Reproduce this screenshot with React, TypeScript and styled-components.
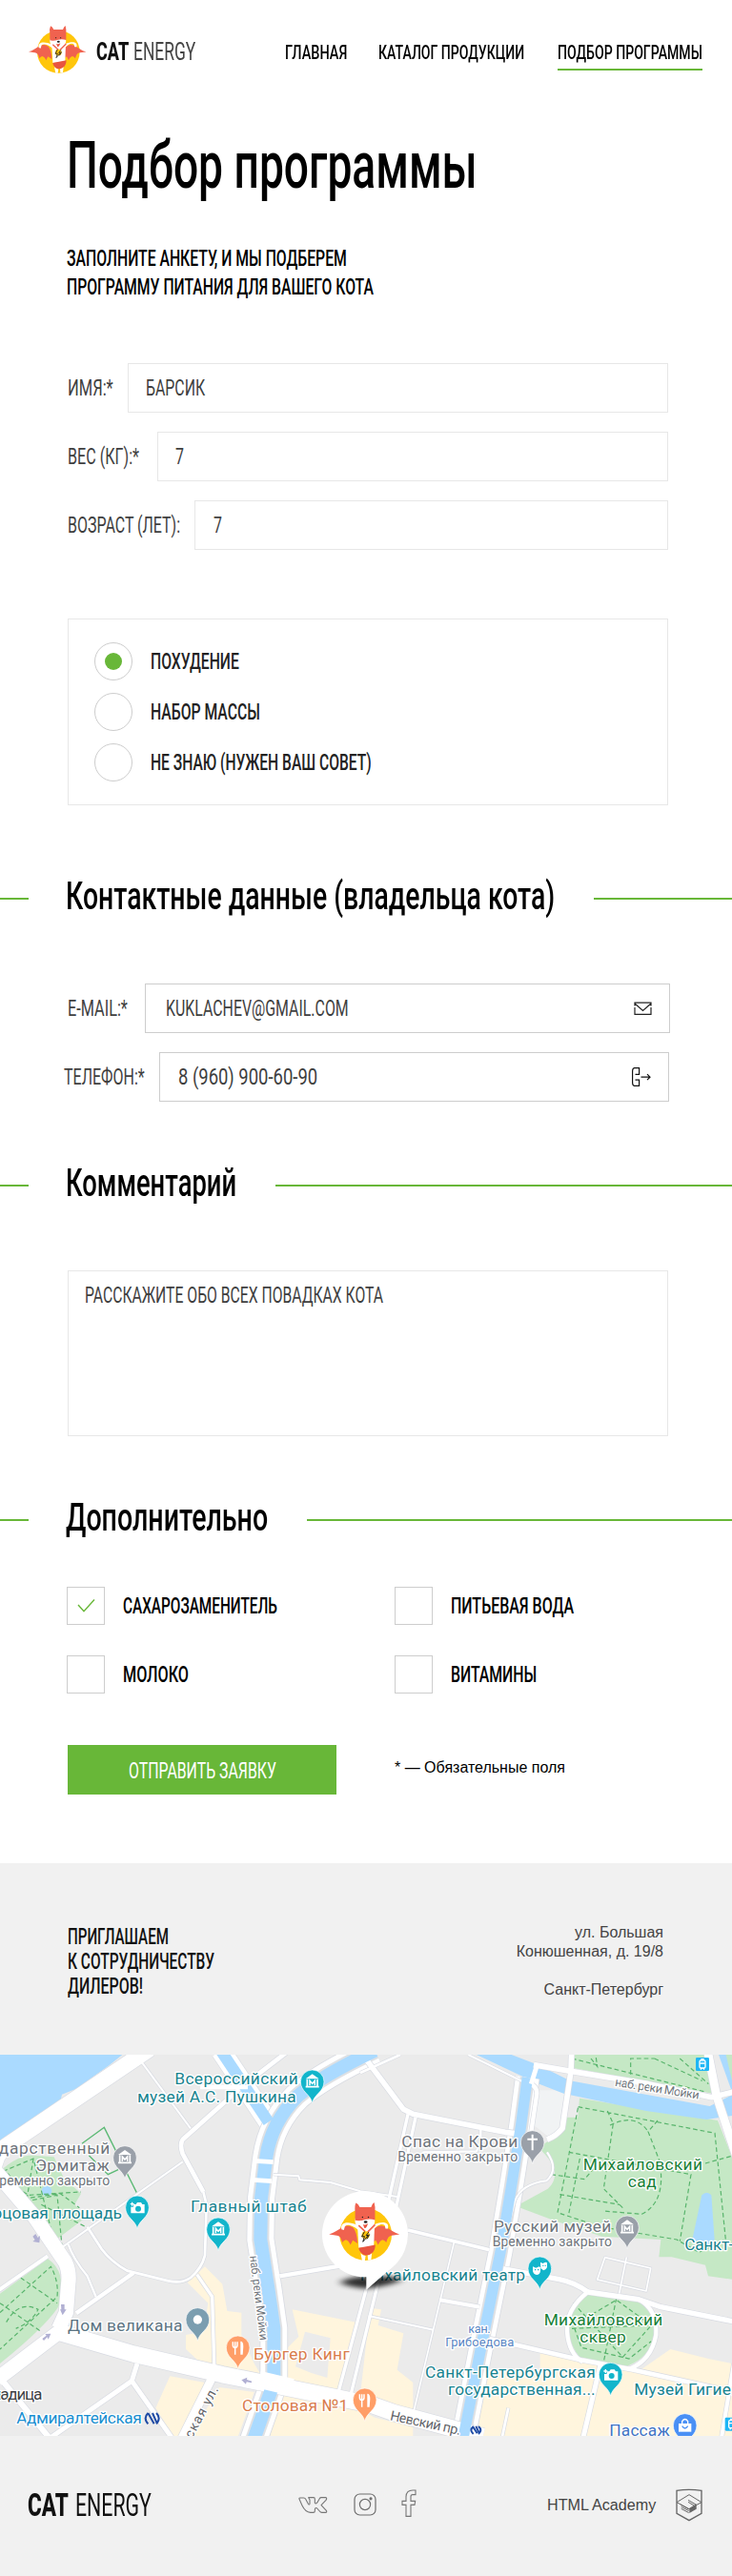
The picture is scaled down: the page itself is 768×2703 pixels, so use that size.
import React, { useLayoutEffect, useRef, useState } from 'react';
import styled, { createGlobalStyle, css } from 'styled-components';

const GREEN = '#68b738';

const GlobalStyle = createGlobalStyle`
  *, *::before, *::after { box-sizing: border-box; }
  body { margin: 0; background: #fff; color: #000; font-family: Roboto, sans-serif; }
  h1, h2, p { margin: 0; font-weight: inherit; }
  button { font: inherit; }
  a { color: inherit; text-decoration: none; }
`;

/* ---------- condensed type ---------- */

const NarrowBox = styled.span<{ $w: number }>`
  display: block;
  flex: none;
  width: ${(p) => p.$w}px;
  white-space: nowrap;
`;

const NarrowInk = styled.span<{ $size: number; $weight: number; $color?: string }>`
  display: inline-block;
  vertical-align: top;
  transform-origin: 0 50%;
  font-family: Roboto, sans-serif;
  font-size: ${(p) => p.$size}px;
  font-weight: ${(p) => p.$weight};
  ${(p) => p.$color && css`color: ${p.$color};`}
`;

type NarrowProps = { w: number; size?: number; weight?: number; color?: string; children: string };

/** Squeezes a line of text horizontally so that it fills exactly `w` pixels. */
function Narrow({ w, size = 23, weight = 420, color, children }: NarrowProps) {
  const ref = useRef<HTMLSpanElement>(null);
  const [scale, setScale] = useState(1);
  useLayoutEffect(() => {
    if (ref.current) setScale(w / ref.current.offsetWidth);
  }, [w, size, weight, children]);
  const drop = size === 23 ? 1 : 0;
  return (
    <NarrowBox $w={w}>
      <NarrowInk
        ref={ref}
        $size={size}
        $weight={weight}
        $color={color}
        style={{ transform: `translateY(${drop}px) scaleX(${scale})` }}
      >
        {children}
      </NarrowInk>
    </NarrowBox>
  );
}

/* ---------- header ---------- */

const Page = styled.div`
  width: 768px;
  overflow: hidden;
`;

const Header = styled.header`
  display: flex;
  justify-content: space-between;
  align-items: flex-start;
  height: 108px;
  padding: 27px 31px 0 30px;
`;

const Brand = styled.a`
  display: flex;
  align-items: center;
  height: 54px;
  line-height: 30px;
`;

const BrandLogo = styled.span`
  display: flex;
  align-self: flex-start;
  margin-right: 11px;
`;

const BrandName = styled.span<{ $gap: number }>`
  display: flex;
  gap: ${(p) => p.$gap}px;
`;

const Nav = styled.nav`
  display: flex;
  gap: 35px;
  padding-top: 16px;
`;

const NavLink = styled.a<{ $active?: boolean }>`
  line-height: 24px;
  padding-bottom: 5px;
  border-bottom: 2px solid ${(p) => (p.$active ? GREEN : 'transparent')};
  &:first-child { margin-right: -2px; }
`;

function CatLogo({ width, height }: { width: number; height: number }) {
  const wing = 'M90 163 C104 159 112 152 122 146 Q138 136 152 146 Q162 158 163 186 L151 178 L145 190 Q140 178 133 177 Q128 178 124 184 Q120 166 110 166Z';
  return (
    <svg width={width} height={height} viewBox="90 81 180 150">
      <circle cx="184" cy="163" r="67" fill="#ffc60b" />
      <path d={wing} fill="#f0624f" />
      <path d={wing} fill="#f0624f" transform="translate(361 0) scale(-1 1)" />
      <path d="M122 150 C118 132 138 128 164 140 L170 156 C152 140 138 136 131 142 L128 152Z" fill="#fff" />
      <path d="M241 148 C246 132 228 128 206 138 L199 156 C214 138 226 134 233 140 L235 148Z" fill="#fff" />
      <path d="M163 138H207L205 194L166 198Z" fill="#fff" />
      <path d="M157 122H207Q210 136 200 145Q182 158 165 146Q155 138 157 122Z" fill="#fff" />
      <path d="M157 105Q155 90 159 82Q165 84 169 93H198Q201 84 206 81Q209 92 208 105V126Q196 122 183 125Q168 130 157 127Z" fill="#f0624f" />
      <circle cx="176" cy="119" r="1.7" fill="#222" />
      <circle cx="191" cy="119" r="1.7" fill="#222" />
      <ellipse cx="184" cy="131" rx="4.5" ry="3" fill="#222" />
      <path d="M177 137Q184 141 190 135Q186 149 181 147Z" fill="#e8543f" />
      <path d="M166 140L183 156M208 138L189 157" stroke="#f0624f" strokeWidth="4" fill="none" />
      <circle cx="184" cy="165" r="10" fill="#ffc60b" />
      <path d="M181 156L174 169L181 168L177 182L191 165L185 166L192 157M187 175L194 163" stroke="#222" strokeWidth="2.4" fill="none" />
      <path d="M166 198L209 190Q208 207 198 213Q190 219 180 216Q168 210 166 198Z" fill="#e8543f" />
      <path d="M171 211Q176 217 184 218L182 230H175Z" fill="#fff" />
      <path d="M189 217Q196 215 200 211L198 229H190Z" fill="#fff" />
    </svg>
  );
}

/* ---------- form ---------- */

const Intro = styled.div`
  padding: 0 67px 0 70px;
  h1 { margin-top: 31px; line-height: 70px; }
  p { margin-top: 47px; line-height: 30px; }
`;

const Rows = styled.div<{ $top: number; $left?: number; $right?: number }>`
  display: flex;
  flex-direction: column;
  gap: 20px;
  padding: 0 ${(p) => p.$right ?? 67}px 0 ${(p) => p.$left ?? 71}px;
  margin-top: ${(p) => p.$top}px;
`;

const Field = styled.label<{ $gap: number; $shift?: number; $trim?: number }>`
  display: flex;
  align-items: center;
  gap: ${(p) => p.$gap}px;
  margin-left: ${(p) => p.$shift ?? 0}px;
  margin-right: ${(p) => p.$trim ?? 0}px;
  color: #3f3f3f;
  line-height: 30px;
`;

const FieldBox = styled.span<{ $pad: number; $strong?: boolean }>`
  display: flex;
  align-items: center;
  justify-content: space-between;
  flex: 1;
  height: 52px;
  padding: 0 18px 0 ${(p) => p.$pad}px;
  border: 1px solid ${(p) => (p.$strong ? '#cdcdcd' : '#e7e7e7')};
  svg { flex: none; }
`;

const GoalSet = styled.div`
  display: flex;
  flex-direction: column;
  gap: 13px;
  height: 196px;
  margin: 72px 67px 0 71px;
  padding: 24px 27px;
  border: 1px solid #e7e7e7;
`;

const Option = styled.label<{ $color?: string }>`
  display: flex;
  align-items: center;
  gap: 19px;
  height: 40px;
  line-height: 30px;
  color: ${(p) => p.$color ?? '#000'};
`;

const Mark = styled.span<{ $round?: boolean }>`
  display: flex;
  align-items: center;
  justify-content: center;
  flex: none;
  width: 40px;
  height: 40px;
  border: 1px solid #cdcdcd;
  border-radius: ${(p) => (p.$round ? '50%' : '0')};
`;

const Dot = styled.span`
  width: 18px;
  height: 18px;
  border-radius: 50%;
  background: ${GREEN};
`;

const SectionTitle = styled.h2<{ $top: number }>`
  display: flex;
  align-items: center;
  height: 42px;
  margin-top: ${(p) => p.$top}px;
  line-height: 42px;
  &::before { content: ''; width: 30px; height: 2px; margin-right: 39px; background: ${GREEN}; }
  &::after { content: ''; flex: 1; height: 2px; margin-left: 41px; background: ${GREEN}; }
  > span { padding-bottom: 6px; }
`;

const Comment = styled.div`
  height: 174px;
  margin: 68px 67px 0 71px;
  padding: 10px 17px;
  border: 1px solid #e7e7e7;
  line-height: 30px;
  color: #3f3f3f;
`;

const Extras = styled.div`
  display: grid;
  grid-template-columns: 344px 1fr;
  row-gap: 32px;
  margin: 49px 67px 0 70px;
`;

const SubmitRow = styled.div`
  display: flex;
  align-items: center;
  gap: 61px;
  margin: 54px 0 72px 71px;
`;

const Submit = styled.button`
  display: flex;
  align-items: center;
  justify-content: center;
  width: 282px;
  height: 52px;
  padding: 2px 0 0;
  border: 0;
  background: ${GREEN};
  color: #fff;
  line-height: 30px;
`;

const Note = styled.span`
  font: 16px/20px 'Liberation Sans', Arial, sans-serif;
  padding-bottom: 4px;
`;

/* ---------- dealers, map, footer ---------- */

const Dealers = styled.section`
  display: flex;
  justify-content: space-between;
  height: 201px;
  padding: 64px 72px 0 71px;
  background: #f1f1f1;
  color: #111;
  line-height: 26px;
`;

const Address = styled.address`
  font: normal 16px/20px 'Liberation Sans', Arial, sans-serif;
  color: #444;
  text-align: right;
  margin-top: -1px;
  p + p { margin-top: 20px; }
`;

const MapFrame = styled.div`
  height: 400px;
  svg { display: block; }
`;

const Footer = styled.footer`
  display: grid;
  grid-template-columns: 284px 290px 1fr;
  height: 147px;
  padding: 54px 31px 0 29px;
  background: #f1f1f1;
  color: #111;
`;

const FooterBrand = styled.div`
  display: flex;
  gap: 7px;
  height: 38px;
  line-height: 38px;
`;

const Social = styled.div`
  display: flex;
  align-items: center;
  height: 36px;
  svg:nth-child(2) { margin-left: 27px; }
  svg:nth-child(3) { margin: -4px 0 0 26px; }
`;

const Academy = styled.a`
  display: flex;
  align-items: center;
  justify-content: space-between;
  height: 36px;
  font: 16.15px/20px 'Liberation Sans', Arial, sans-serif;
  color: #444;
  margin-left: -29px;
`;

/* ---------- map ---------- */

type PinKind = 'museum' | 'camera' | 'dot' | 'food' | 'cross' | 'theatre' | 'bag';

function Pin({ x, y, color, kind }: { x: number; y: number; color: string; kind: PinKind }) {
  return (
    <g transform={`translate(${x} ${y})`}>
      <path d="M0 67C-5 40 -37 32 -37 0A37 37 0 0 1 37 0C37 32 5 40 0 67Z" fill={color} stroke="#fff" strokeWidth="2" />
      {kind === 'museum' && (
        <>
          <path d="M-21 -9L0 -24L21 -9Z" fill="#fff" />
          <path d="M-16 -8V14M16 -8V14M-21 16H21" stroke="#fff" strokeWidth="5" />
          <path d="M-8 12V-3L0 6L8 -3V12" stroke="#fff" strokeWidth="4.5" fill="none" />
        </>
      )}
      {kind === 'camera' && (
        <>
          <path d="M-12 -10H-4L0 -16H12L16 -10H23V18H-20V-2H-12Z" fill="#fff" />
          <circle cx="3" cy="4" r="9" fill={color} />
          <path d="M-22 -11H-10M-16 -17V-5" stroke="#fff" strokeWidth="4" />
        </>
      )}
      {kind === 'dot' && <circle r="14" fill="#fff" />}
      {kind === 'food' && (
        <>
          <path d="M-16 -18V-8Q-16 0 -9 0Q-2 0 -2 -8V-18M-9 -18V22" stroke="#fff" strokeWidth="4.5" fill="none" />
          <path d="M8 -20Q17 -20 17 -4L15 22H8Z" fill="#fff" />
        </>
      )}
      {kind === 'cross' && <path d="M0 -25V25M-16 -10H16" stroke="#fff" strokeWidth="6" />}
      {kind === 'theatre' && (
        <>
          <path d="M2 -20L9 -16L18 -20L23 -18V-4Q20 5 12 6L3 0Z" fill="#fff" />
          <path d="M-22 -6L-12 -2L-2 -6L2 -3V8Q0 20 -10 20Q-20 18 -22 8Z" fill="#fff" />
          <path d="M-16 4H-12M-7 4H-3M9 -9H12M16 -9H19" stroke={color} strokeWidth="4" />
        </>
      )}
      {kind === 'bag' && (
        <>
          <path d="M-20 -6H20V20H-20Z" fill="#fff" />
          <path d="M-9 -6V-13Q0 -26 9 -13V-6" stroke="#fff" strokeWidth="4" fill="none" />
          <path d="M-9 2Q0 16 9 2" stroke={color} strokeWidth="4" fill="none" />
        </>
      )}
    </g>
  );
}

const MapText = styled.text<{ $size?: number; $weight?: number }>`
  font-family: Roboto, sans-serif;
  font-size: ${(p) => p.$size ?? 52}px;
  font-weight: ${(p) => p.$weight ?? 400};
  paint-order: stroke;
  stroke: #fff;
  stroke-width: 8px;
  stroke-linejoin: round;
`;

type LabelProps = { x: number; y: number; w: number; color: string; size?: number; weight?: number; rotate?: number; children: string };

function Label({ x, y, w, color, size, weight, rotate, children }: LabelProps) {
  return (
    <MapText
      x={x}
      y={y}
      textLength={w}
      fill={color}
      $size={size}
      $weight={weight}
      transform={rotate ? `rotate(${rotate} ${x} ${y})` : undefined}
    >
      {children}
    </MapText>
  );
}

const TEAL = '#18838f';
const CYAN_PIN = '#12b5cb';
const GREY = '#6e747b';
const GREY_PIN = '#9aa0a9';

/* [path, width] pairs, in map units (three to the pixel) */
const ROADS: [string, number][] = [
  ['M470 0L20 305Q-20 335 -20 390', 50],
  ['M-10 390L110 530L205 670Q220 700 215 740L208 830L185 880', 46],
  ['M180 890L420 960L700 1025L1170 1120L1240 1145L1520 1220', 52],
  ['M200 880L-10 1040', 46],
  ['M0 1035L160 1230', 18],
  ['M-5 760L150 652', 12],
  ['M432 990L415 1045L150 1230', 15],
  ['M415 1045L545 1230', 15],
  ['M665 1040L570 1230', 26],
  ['M900 12L760 120L575 285Q565 300 575 330L640 450', 14],
  ['M640 450L650 490L645 650Q635 690 600 720Q570 740 530 730L400 698Q350 670 320 630L275 560', 8],
  ['M445 40L600 250', 6],
  ['M575 355L185 632', 6],
  ['M215 615Q230 660 275 715L302 780', 7],
  ['M240 832L420 705', 13],
  ['M620 710L668 780L675 1020', 10],
  ['M880 715L1070 683', 13],
  ['M860 395L940 400L943 412L1040 420L1134 448L1250 465', 6],
  ['M1134 8L1270 190L1300 205L1590 262L1640 268', 17],
  ['M1134 75L1260 18', 8],
  ['M1284 205L1200 580L1060 1100', 10],
  ['M1308 215L1240 530L1100 1105', 10],
  ['M1513 245V290L1500 322L1330 325', 7],
  ['M1284 570L1540 632', 11],
  ['M1430 605L1300 1150', 5],
  ['M1384 790L1510 812', 12],
  ['M1160 840L1364 884', 6],
  ['M1584 692L1760 725Q1810 735 1850 765', 16],
  ['M1850 765L2010 788L2080 812L2310 858', 16],
  ['M1850 765Q1780 820 1785 890Q1790 960 1834 985', 13],
  ['M2010 788Q2070 820 2065 900Q2050 980 1980 1008', 13],
  ['M1540 912L1834 980L1994 1010L2310 1080', 14],
  ['M1892 985L1834 1230', 15],
  ['M2310 990L2270 1230', 12],
  ['M1904 656L2048 690L2034 762L1880 726Z', 5],
  ['M1972 655L1949 770', 5],
  ['M1799 10L1797 70L1770 250Q1750 275 1722 285', 17],
  ['M1680 50L1797 70L2040 110L2240 152L2310 135', 17],
  ['M2226 0L2256 150L2320 345', 26],
  ['M1474 18L1650 105', 6],
  ['M1650 105Q1690 110 1690 140L1672 260', 13],
  ['M1722 325Q1760 380 1720 415Q1640 425 1620 480L1600 560', 6],
  ['M1580 1225L1600 1130', 8],
];

const CANALS = [
  { d: 'M1180 5Q1010 85 935 150Q855 230 838 340L822 470L820 600L845 760L862 880V1050L795 1240', total: 84, water: 42 },
  { d: 'M1660 90L1640 240L1610 430L1575 640L1510 960L1455 1240', total: 74, water: 34 },
];

const TREES = [
  'M10 385L105 345L165 585L20 385M-5 400L90 460L255 450M105 345L85 470L190 455L250 500M130 490L270 560M80 480L180 460L195 620',
  'M0 830L160 685Q185 730 180 780L0 945M65 720L180 800M0 800L130 890M20 860Q60 790 120 820Q100 860 50 880',
  'M1820 182L2250 265L2284 600L2200 640L2130 600L1890 560L1755 515L1820 182M1790 325L2175 395L2140 605M1762 458L1950 490M1912 195L1930 235L1900 440L1960 500M2070 225L2040 260L2075 350Q2100 480 2020 520L1900 510M1920 240Q2000 200 2040 260M1735 395L1840 410L1870 375M1825 345L1790 520M2220 360L2310 335',
  'M1800 30L2220 135M1985 80V30H2060M2060 30L2210 100M2140 30L2230 110M1860 30L1880 55L1875 20',
  'M1805 800L1960 970L2050 870L1940 790L1805 870L1830 940L1980 975L2050 920M1940 785L1900 985M1800 880L2040 870',
];

function CityMap() {
  return (
    <svg width="768" height="400" viewBox="0 18 2304 1200">
      <defs>
        <filter id="shade" x="-30%" y="-80%" width="160%" height="260%">
          <feGaussianBlur stdDeviation="12 8" />
        </filter>
      </defs>
      <rect y="18" width="2304" height="1200" fill="#ebebeb" />
      <path d="M0 18H385L345 50L240 125L195 143L190 165L0 295Z" fill="#aadaff" />
      <path d="M0 385Q60 330 110 335L170 340L200 405L255 455L235 490L270 530L170 605L120 560Z" fill="#c5e8c5" />
      <path d="M150 660Q210 700 190 800Q160 860 0 990V770Z" fill="#c5e8c5" />
      <circle cx="147" cy="447" r="16" fill="#aadaff" />
      <path d="M258 298L328 247L430 452M280 335L340 395L372 380" stroke="#5bb974" strokeWidth="4" fill="none" />
      <path d="M590 735L645 685L700 740L715 825L760 830V900L800 990L830 1040L650 1005L585 945V900L640 890L655 800Z" fill="#fff5dd" />
      <path d="M535 1030L645 1050L600 1170L575 1218H545L490 1130Z M690 1065L800 1080L750 1218H600Z" fill="#fff5dd" />
      <path d="M920 820L1120 860L1070 1090L895 1055V950L940 905Z M880 1085L1134 1135L1180 1160L1300 1190V1218H850Z M1165 815L1200 820L1190 870L1270 895L1250 1010L1300 1050V1140L1134 1090Z" fill="#fff5dd" />
      <path d="M960 890L1040 910L1030 1035L980 1020L930 1000Z" fill="#ebebeb" />
      <path d="M1700 955L1890 990L2010 1015L2110 945L2230 975L2304 990V1218H1485L1525 1010L1700 1010Z" fill="#fff5dd" />
      <path d="M1824 155L2259 225L2304 340V725L2229 715L2220 680L2114 655H2074L2080 600L1894 590L1744 540L1624 495L1724 440Q1780 390 1694 310L1774 260L1784 215H1819Z" fill="#c5e8c5" />
      <path d="M1799 18H2229L2244 140L1804 60Z M2265 18H2304V130Z" fill="#c5e8c5" />
      <path d="M1854 770L2010 790Q2064 830 2060 905Q2045 970 1974 998L1834 980Q1785 930 1790 860Q1800 800 1854 770Z" fill="#c5e8c5" />
      <path d="M2179 600L2209 460Q2225 445 2239 460L2249 600L2214 630Z" fill="#aadaff" />
      {TREES.map((d) => (
        <path key={d} d={d} stroke="#58b46c" strokeWidth="3.6" strokeDasharray="14 9" fill="none" />
      ))}
      <path d="M1700 130L1790 130L1770 245L1725 275L1680 240Z" fill="#f1f3f4" />
      <path d="M1500 18H1610L1694 50L1794 100L2234 180L2304 145V210L2224 222L2034 195L1774 140L1684 105Z" fill="#aadaff" />
      <path d="M2262 18H2285L2304 100V135Z" fill="#aadaff" />
      <path d="M695 5L845 230" stroke="#dadde3" strokeWidth="66" />
      <path d="M695 5L845 230" stroke="#fff" strokeWidth="62" />
      {CANALS.map((c) => (
        <g key={c.d} fill="none">
          <path d={c.d} stroke="#d8dbe2" strokeWidth={c.total + 5} />
          <path d={c.d} stroke="#fff" strokeWidth={c.total} />
          <path d={c.d} stroke="#dfe1e4" strokeWidth={c.water + 12} />
        </g>
      ))}
      {ROADS.map(([d, w]) => (
        <path key={d} d={d} stroke="#d8dbe2" strokeWidth={w + 4} fill="none" strokeLinejoin="round" />
      ))}
      {ROADS.map(([d, w]) => (
        <path key={d} d={d} stroke="#fff" strokeWidth={w} fill="none" strokeLinejoin="round" />
      ))}
      <path d="M695 5L845 230" stroke="#aadaff" strokeWidth="36" />
      {CANALS.map((c) => (
        <path key={c.d} d={c.d} stroke="#aadaff" strokeWidth={c.water} fill="none" />
      ))}
      <path d="M800 352L860 356M795 412L855 416M630 120L780 120" stroke="#fff" strokeWidth="14" />
      <path d="M815 1040L920 1065" stroke="#fff" strokeWidth="54" />
      <path d="M1692 45L1672 110" stroke="#fff" strokeWidth="15" />
      <g fill="#b1b0d3">
        <path d="M103 590L112 582L119 594L126 588L124 610L103 606L110 601Z" />
        <path d="M192 804H203V820H209L197 838L189 820H193Z" />
        <path d="M133 912L146 902L142 897L160 896L152 914L149 907L138 918Z" />
        <path d="M760 1042L778 1034L777 1041L793 1046L791 1051L776 1048L774 1055Z" />
      </g>

      <Label x={550} y={112} w={388} color={TEAL}>Всероссийский</Label>
      <Label x={432} y={167} w={500} color={TEAL}>музей А.С. Пушкина</Label>
      <Label x={-58} y={330} w={404} color={GREY}>сударственный</Label>
      <Label x={112} y={384} w={232} color={GREY}>Эрмитаж</Label>
      <Label x={-26} y={429} w={372} size={42} color={GREY}>временно закрыто</Label>
      <Label x={-120} y={535} w={504} color={TEAL}>Дворцовая площадь</Label>
      <Label x={600} y={512} w={365} color={TEAL}>Главный штаб</Label>
      <Label x={213} y={889} w={361} color="#5c7482">Дом великана</Label>
      <Label x={798} y={977} w={302} color="#d97c4b">Бургер Кинг</Label>
      <Label x={762} y={1141} w={334} color="#d97c4b">Столовая №1</Label>
      <Label x={-25} y={1103} w={158} color="#3c4043">ладица</Label>
      <Label x={52} y={1180} w={394} color="#1a8fd1">Адмиралтейская</Label>
      <Label x={786} y={652} w={268} size={37} rotate={83} color={GREY}>наб. реки Мойки</Label>
      <Label x={592} y={1252} w={205} size={42} rotate={-62} color="#5f6368">йская ул.</Label>
      <Label x={1264} y={308} w={366} color={GREY}>Спас на Крови</Label>
      <Label x={1252} y={353} w={378} size={42} color={GREY}>Временно закрыто</Label>
      <Label x={1934} y={116} w={268} size={38} rotate={9} color={GREY}>наб. реки Мойки</Label>
      <Label x={1835} y={381} w={376} weight={450} color="#188038">Михайловский</Label>
      <Label x={1976} y={435} w={90} weight={450} color="#188038">сад</Label>
      <Label x={1554} y={577} w={370} color={GREY}>Русский музей</Label>
      <Label x={1550} y={621} w={376} size={42} color={GREY}>Временно закрыто</Label>
      <Label x={2155} y={632} w={190} color={TEAL}>Санкт-П</Label>
      <Label x={1133} y={728} w={520} color={TEAL}>Михайловский театр</Label>
      <Label x={1712} y={871} w={374} weight={450} color="#188038">Михайловский</Label>
      <Label x={1825} y={925} w={145} weight={450} color="#188038">сквер</Label>
      <Label x={1474} y={894} w={70} size={39} color="#5a86c4">кан.</Label>
      <Label x={1402} y={936} w={216} size={39} color="#5a86c4">Грибоедова</Label>
      <Label x={1338} y={1035} w={536} color={TEAL}>Санкт-Петербургская</Label>
      <Label x={1410} y={1089} w={464} color={TEAL}>государственная...</Label>
      <Label x={1996} y={1090} w={376} color={TEAL}>Музей Гигиены</Label>
      <Label x={1918} y={1218} w={190} color="#3f74c4">Пассаж</Label>
      <Label x={1226} y={1168} w={226} size={43} rotate={12} color="#5f6368">Невский пр.</Label>

      <Pin x={983} y={103} color={CYAN_PIN} kind="museum" />
      <Pin x={393} y={342} color={GREY_PIN} kind="museum" />
      <Pin x={432} y={499} color={CYAN_PIN} kind="camera" />
      <Pin x={687} y={568} color={CYAN_PIN} kind="museum" />
      <Pin x={622} y={852} color="#7b9eb0" kind="dot" />
      <Pin x={749} y={940} color="#ff9e67" kind="food" />
      <Pin x={1148} y={1105} color="#ff9e67" kind="food" />
      <Pin x={1676} y={294} color={GREY_PIN} kind="cross" />
      <Pin x={1974} y={562} color={GREY_PIN} kind="museum" />
      <Pin x={1699} y={691} color={CYAN_PIN} kind="theatre" />
      <Pin x={1922} y={1025} color={CYAN_PIN} kind="camera" />
      <Pin x={2156} y={1185} color="#4a90f5" kind="bag" />

      <g fill="none" stroke="#1f4ba5" strokeWidth="6">
        <path d="M466 1146Q450 1162 466 1180M492 1146Q508 1162 492 1180M466 1146L485 1180M480 1146L495 1180" />
        <path d="M1490 1188Q1476 1200 1490 1212M1506 1188Q1520 1200 1506 1212M1488 1188L1502 1210M1498 1188L1508 1208" />
      </g>
      {[[2190, 27], [2282, 1160]].map(([x, y]) => (
        <g key={x} transform={`translate(${x} ${y})`}>
          <rect width="42" height="42" rx="4" fill="#1fb6f5" />
          <rect x="12" y="9" width="18" height="24" rx="4" fill="none" stroke="#fff" strokeWidth="4" />
          <path d="M13 18H29M15 38L19 33M27 38L23 33M16 5H26" stroke="#fff" strokeWidth="4" />
        </g>
      ))}

      <path d="M1070 734Q1120 705 1240 718Q1290 724 1230 740Q1190 750 1154 754Q1090 748 1070 734Z" fill="#000" opacity="0.8" filter="url(#shade)" />
      <circle cx="1149" cy="583" r="135" fill="#fff" />
      <path d="M1238 684L1153 758V700Z" fill="#fff" />
      <svg x="1034" y="483" width="224" height="184" viewBox="0 0 224 184">
        <CatLogo width={224} height={184} />
      </svg>
    </svg>
  );
}

/* ---------- small icons ---------- */

const MailIcon = () => (
  <svg width="19" height="14" viewBox="0 0 19 14" fill="none" stroke="#222" strokeWidth="1.2">
    <path d="M1 4.5V1.1H18V4.5M1 2L9.5 9.5L18 2M1 6V13.3H18V6" />
  </svg>
);

const PhoneIcon = () => (
  <svg width="20" height="20" viewBox="0 0 20 20" fill="none" stroke="#111" strokeWidth="1.2">
    <path d="M3.5 7.3H7.6V0.6H2.5Q.6 1 .6 4V16Q.6 19 2.5 19.4H7.6V13.2H3.5" />
    <path d="M9.5 10.2H19M16 7.2L19 10.2L16 13.2" />
  </svg>
);

const CheckIcon = () => (
  <svg width="19" height="14" viewBox="0 0 19 14" fill="none" stroke={GREEN} strokeWidth="1.4">
    <path d="M1 6L7 12.8L18 .5" />
  </svg>
);

const VkIcon = () => (
  <svg width="31" height="19" viewBox="69 82 93 57" fill="none" stroke="#777" strokeWidth="3.3" strokeLinejoin="round">
    <path d="M74 88H86Q90 88 92 92L100 107Q105 112 105 105V94L101 87H117Q121 87 121 92V104Q124 109 129 102L136 90Q138 87 141 87H156Q160 89 156 95L141 111L157 128Q160 134 155 134H143Q139 134 136 130L128 121Q122 117 121 125V130Q121 134 116 134H107Q91 133 81 112L72 92Q71 88 74 88Z" />
  </svg>
);

const InstagramIcon = () => (
  <svg width="24" height="24" viewBox="0 0 24 24" fill="none" stroke="#6f6f6f" strokeWidth="1.2">
    <rect x="1" y="1" width="22" height="22" rx="5.5" />
    <circle cx="12" cy="12" r="5.6" />
    <circle cx="18" cy="5.8" r="1" fill="#6f6f6f" />
  </svg>
);

const FacebookIcon = () => (
  <svg width="16" height="29" viewBox="395 65 48 87" fill="none" stroke="#777" strokeWidth="3.3">
    <path d="M440 68V82H431Q425 82 425 88V102H439L437 114H425V150H410V114H398V102H410V88Q411 68 431 68Z" />
  </svg>
);

const ShieldIcon = () => (
  <svg width="28" height="35" viewBox="1259 62 84 103" fill="none" stroke="#666" strokeWidth="4">
    <path d="M1262 68Q1300 62 1340 68V140L1301 162L1262 140Z" />
    <path d="M1262 105L1301 81L1340 105L1301 126Z" strokeWidth="3" />
    <path d="M1302 124L1324 110V126L1302 139Z" fill="#666" stroke="none" />
    <path d="M1298 98L1322 112M1298 104L1316 115M1274 112L1300 127M1276 119L1300 132M1276 125L1300 138" strokeWidth="3" />
  </svg>
);

/* ---------- page ---------- */

export default function App() {
  return (
    <Page>
      <GlobalStyle />
      <Header>
        <Brand href="#">
          <BrandLogo><CatLogo width={60} height={50} /></BrandLogo>
          <BrandName $gap={5}>
            <Narrow w={34} size={26} weight={800} color="#111">CAT</Narrow>
            <Narrow w={65} size={26} weight={370} color="#444">ENERGY</Narrow>
          </BrandName>
        </Brand>
        <Nav>
          <NavLink href="#"><Narrow w={65} size={20.5} weight={480}>ГЛАВНАЯ</Narrow></NavLink>
          <NavLink href="#"><Narrow w={153} size={20.5} weight={480}>КАТАЛОГ ПРОДУКЦИИ</Narrow></NavLink>
          <NavLink href="#" $active><Narrow w={152} size={20.5} weight={480}>ПОДБОР ПРОГРАММЫ</Narrow></NavLink>
        </Nav>
      </Header>

      <main>
        <Intro>
          <h1><Narrow w={431} size={69} weight={460}>Подбор программы</Narrow></h1>
          <p>
            <Narrow w={294} weight={480}>ЗАПОЛНИТЕ АНКЕТУ, И МЫ ПОДБЕРЕМ</Narrow>
            <Narrow w={322} weight={480}>ПРОГРАММУ ПИТАНИЯ ДЛЯ ВАШЕГО КОТА</Narrow>
          </p>
        </Intro>

        <Rows $top={65}>
          <Field $gap={15}>
            <Narrow w={48}>ИМЯ:*</Narrow>
            <FieldBox $pad={18}><Narrow w={62}>БАРСИК</Narrow></FieldBox>
          </Field>
          <Field $gap={19}>
            <Narrow w={75}>ВЕС (КГ):*</Narrow>
            <FieldBox $pad={18}><Narrow w={9}>7</Narrow></FieldBox>
          </Field>
          <Field $gap={15}>
            <Narrow w={118}>ВОЗРАСТ (ЛЕТ):</Narrow>
            <FieldBox $pad={19}><Narrow w={9}>7</Narrow></FieldBox>
          </Field>
        </Rows>

        <GoalSet>
          <Option $color="#222"><Mark $round><Dot /></Mark><Narrow w={93} weight={480}>ПОХУДЕНИЕ</Narrow></Option>
          <Option $color="#222"><Mark $round /><Narrow w={115} weight={480}>НАБОР МАССЫ</Narrow></Option>
          <Option $color="#222"><Mark $round /><Narrow w={232} weight={480}>НЕ ЗНАЮ (НУЖЕН ВАШ СОВЕТ)</Narrow></Option>
        </GoalSet>

        <SectionTitle $top={77}><Narrow w={513} size={41} weight={460}>Контактные данные (владельца кота)</Narrow></SectionTitle>
        <Rows $top={68} $right={65}>
          <Field $gap={18}>
            <Narrow w={63}>E-MAIL:*</Narrow>
            <FieldBox $pad={21} $strong><Narrow w={192}>KUKLACHEV@GMAIL.COM</Narrow><MailIcon /></FieldBox>
          </Field>
          <Field $gap={15} $shift={-4} $trim={1}>
            <Narrow w={85}>ТЕЛЕФОН:*</Narrow>
            <FieldBox $pad={19} $strong><Narrow w={146}>8 (960) 900-60-90</Narrow><PhoneIcon /></FieldBox>
          </Field>
        </Rows>

        <SectionTitle $top={67}><Narrow w={179} size={41} weight={460}>Комментарий</Narrow></SectionTitle>
        <Comment><Narrow w={313}>РАССКАЖИТЕ ОБО ВСЕХ ПОВАДКАХ КОТА</Narrow></Comment>

        <SectionTitle $top={67}><Narrow w={212} size={41} weight={460}>Дополнительно</Narrow></SectionTitle>
        <Extras>
          <Option><Mark><CheckIcon /></Mark><Narrow w={162} weight={480}>САХАРОЗАМЕНИТЕЛЬ</Narrow></Option>
          <Option><Mark /><Narrow w={129} weight={480}>ПИТЬЕВАЯ ВОДА</Narrow></Option>
          <Option><Mark /><Narrow w={69} weight={480}>МОЛОКО</Narrow></Option>
          <Option><Mark /><Narrow w={90} weight={480}>ВИТАМИНЫ</Narrow></Option>
        </Extras>
        <SubmitRow>
          <Submit type="button"><Narrow w={155}>ОТПРАВИТЬ ЗАЯВКУ</Narrow></Submit>
          <Note>* — Обязательные поля</Note>
        </SubmitRow>
      </main>

      <Dealers>
        <p>
          <Narrow w={106} weight={480}>ПРИГЛАШАЕМ</Narrow>
          <Narrow w={154} weight={480}>К СОТРУДНИЧЕСТВУ</Narrow>
          <Narrow w={79} weight={480}>ДИЛЕРОВ!</Narrow>
        </p>
        <Address>
          <p>ул. Большая<br />Конюшенная, д. 19/8</p>
          <p>Санкт-Петербург</p>
        </Address>
      </Dealers>

      <MapFrame><CityMap /></MapFrame>

      <Footer>
        <FooterBrand>
          <Narrow w={43} size={33} weight={800}>CAT</Narrow>
          <Narrow w={80} size={33} weight={400}>ENERGY</Narrow>
        </FooterBrand>
        <Social>
          <VkIcon />
          <InstagramIcon />
          <FacebookIcon />
        </Social>
        <Academy href="#">HTML Academy<ShieldIcon /></Academy>
      </Footer>
    </Page>
  );
}
